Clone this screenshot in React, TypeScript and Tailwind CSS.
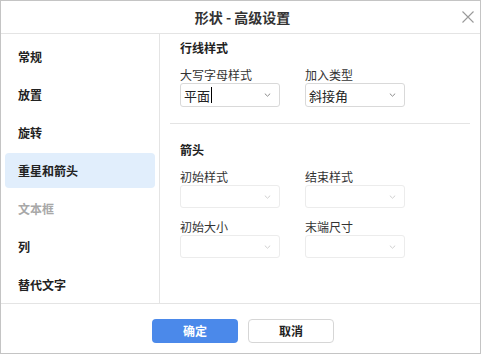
import React from "react";

const font = { fontFamily: '"Noto Sans CJK SC", "Noto Sans", sans-serif' };

const navItems = [
  { label: "常规" },
  { label: "放置" },
  { label: "旋转" },
  { label: "重星和箭头", active: true },
  { label: "文本框", disabled: true },
  { label: "列" },
  { label: "替代文字" },
];

function Chevron({ light }: { light?: boolean }) {
  return (
    <svg width="7" height="4" viewBox="0 0 7 4" className="shrink-0">
      <path
        d="M0.8 0.6 L3.5 3.2 L6.2 0.6"
        fill="none"
        stroke={light ? "#cfcfcf" : "#8a8a8a"}
        strokeWidth="1"
      />
    </svg>
  );
}

function Select({
  value,
  caret,
  disabled,
  h = "h-[24px]",
}: {
  value?: string;
  caret?: boolean;
  disabled?: boolean;
  h?: string;
}) {
  return (
    <div
      className={`${h} w-[100px] rounded-[3px] border flex items-center justify-between pl-[3px] pr-[8px] ${
        disabled ? "border-[#ececec]" : "border-[#d9d9d9]"
      }`}
    >
      <span className="flex items-center text-[13px] leading-none text-[#222]">
        {value}
        {caret && <span className="inline-block w-px h-[16px] bg-black ml-[1px]" />}
      </span>
      <Chevron light={disabled} />
    </div>
  );
}

function Field({
  label,
  value,
  caret,
  disabled,
  h,
}: {
  label: string;
  value?: string;
  caret?: boolean;
  disabled?: boolean;
  h?: string;
}) {
  return (
    <div className="flex flex-col">
      <div className="text-[12px] leading-[17px] text-[#333]">{label}</div>
      <Select value={value} caret={caret} disabled={disabled} h={h} />
    </div>
  );
}

export default function App() {
  return (
    <div
      style={font}
      className="w-[481px] h-[354px] border border-[#c4c4c4] bg-white flex flex-col"
    >
      {/* header */}
      <div className="h-[33px] shrink-0 border-b border-[#e4e4e4] grid grid-cols-[1fr_auto_1fr] items-center">
        <div />
        <div className="text-[14px] font-bold text-[#333] pl-[4px]">形状 - 高级设置</div>
        <div className="flex justify-end pr-[6px]">
          <svg width="12" height="12" viewBox="0 0 12 12">
            <path d="M0.5 0.5 L11.5 11.5 M11.5 0.5 L0.5 11.5" stroke="#9a9a9a" strokeWidth="1.1" />
          </svg>
        </div>
      </div>

      {/* body */}
      <div className="h-[270px] shrink-0 border-b border-[#e4e4e4] flex">
        <div className="w-[159px] shrink-0 border-r border-[#e4e4e4] flex flex-col gap-[3px] pt-[5px] px-[4px]">
          {navItems.map((item) => (
            <div
              key={item.label}
              className={`h-[35px] shrink-0 rounded-[4px] flex items-center pl-[13px] text-[12px] font-bold ${
                item.active ? "bg-[#e1eefc]" : ""
              } ${item.disabled ? "text-[#a8a8a8]" : "text-[#222]"}`}
            >
              {item.label}
            </div>
          ))}
        </div>

        <div className="flex-1 flex flex-col pt-[5px]">
          <div className="px-[20px]">
            <div className="text-[12px] leading-[17px] font-bold text-[#222]">行线样式</div>
            <div className="mt-[10px] grid grid-cols-[100px_100px] gap-x-[25px]">
              <Field label="大写字母样式" value="平面" caret />
              <Field label="加入类型" value="斜接角" />
            </div>
          </div>

          <div className="mt-[16px] mx-[10px] h-px bg-[#e4e4e4]" />

          <div className="px-[20px] mt-[17px]">
            <div className="text-[12px] leading-[17px] font-bold text-[#222]">箭头</div>
            <div className="mt-[10px] grid grid-cols-[100px_100px] gap-x-[25px] gap-y-[10px]">
              <Field label="初始样式" disabled h="h-[23px]" />
              <Field label="结束样式" disabled h="h-[23px]" />
              <Field label="初始大小" disabled h="h-[23px]" />
              <Field label="末端尺寸" disabled h="h-[23px]" />
            </div>
          </div>
        </div>
      </div>

      {/* footer */}
      <div className="flex-1 flex justify-center items-start pt-[15px] pl-[5px] gap-[10px]">
        <button className="w-[86px] h-[24px] rounded-[4px] bg-[#4b89ea] text-white text-[12px] font-bold flex items-center justify-center">
          确定
        </button>
        <button className="w-[86px] h-[24px] rounded-[4px] border border-[#d6d6d6] bg-white text-[#222] text-[12px] font-bold flex items-center justify-center">
          取消
        </button>
      </div>
    </div>
  );
}
